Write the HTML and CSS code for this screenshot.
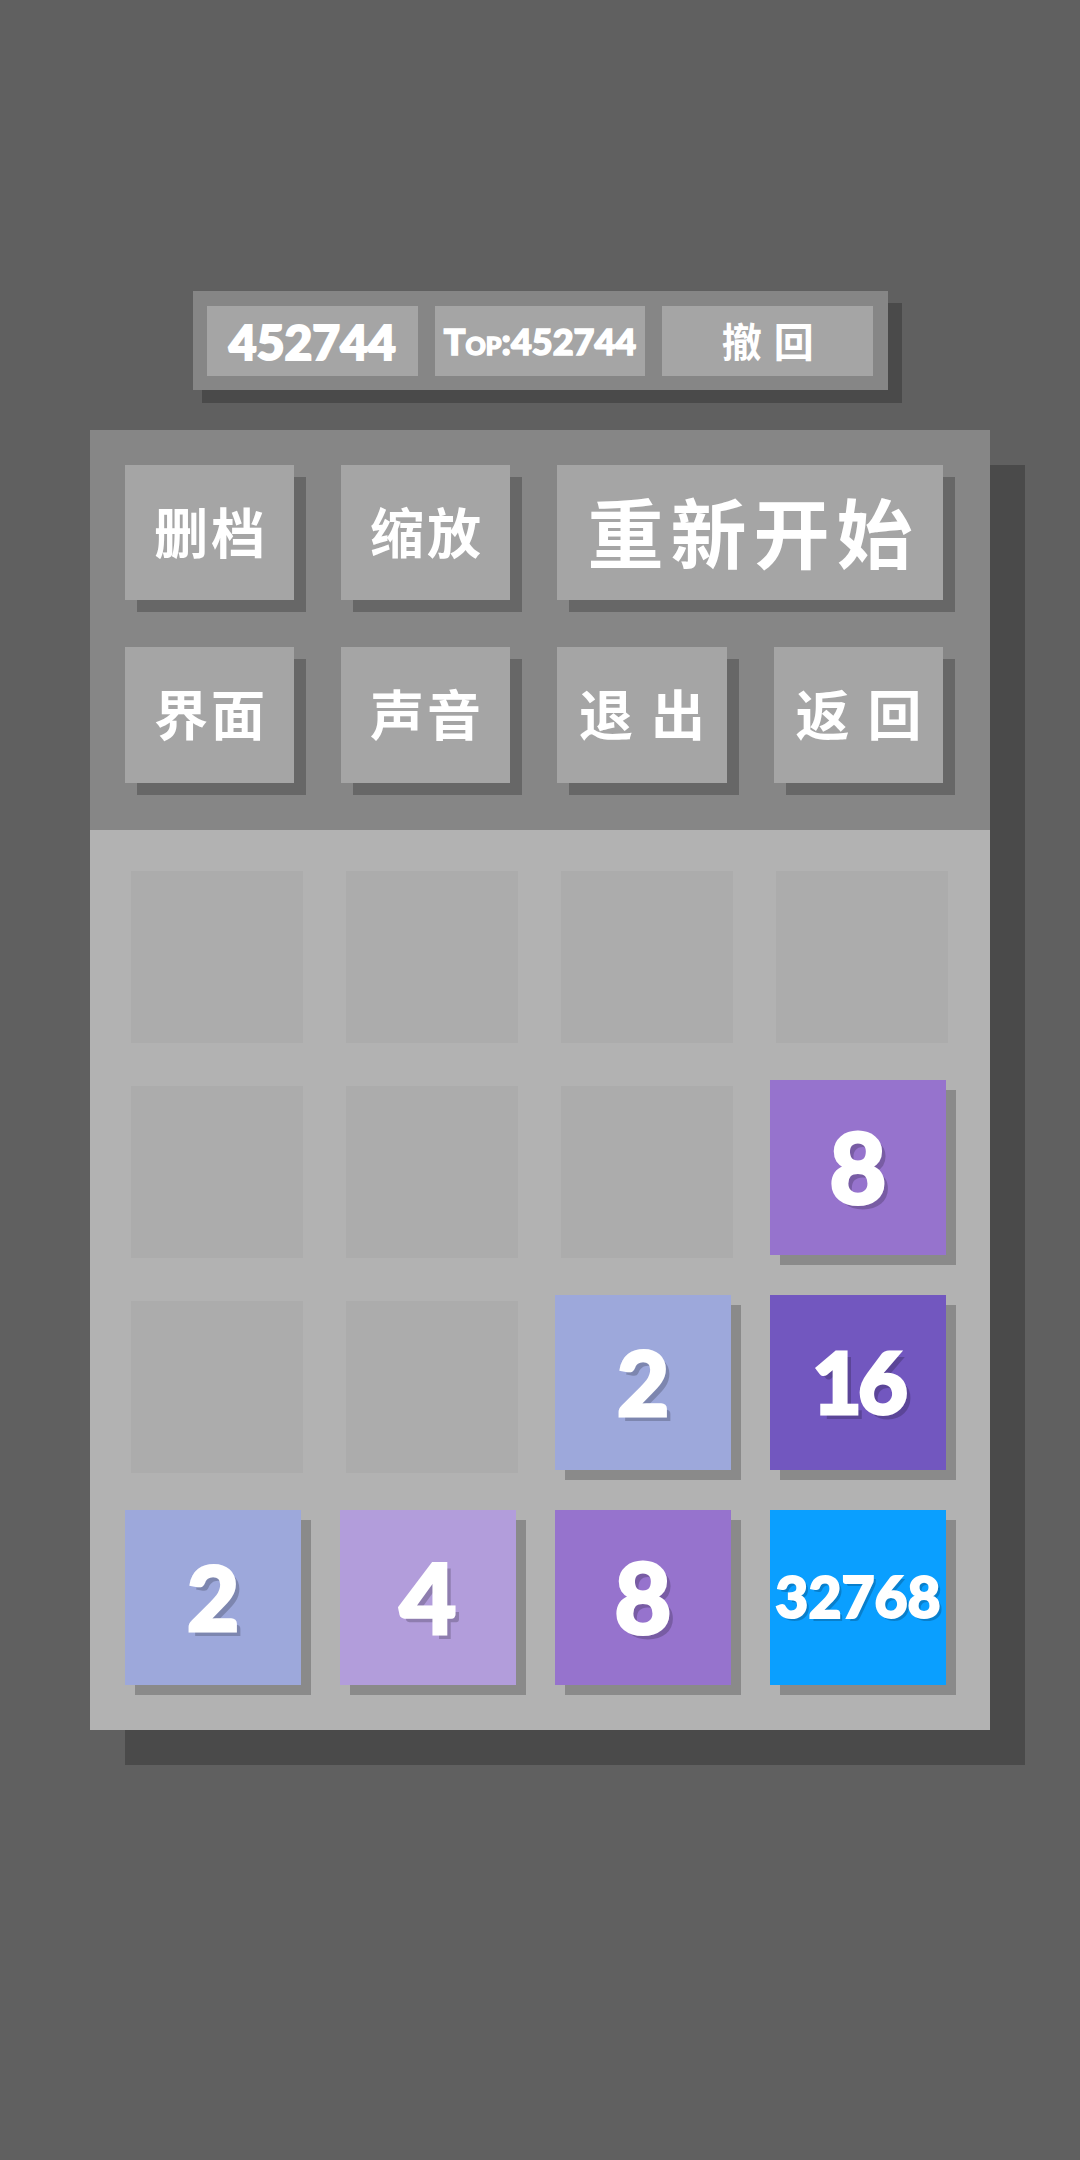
FILE: index.html
```html
<!DOCTYPE html>
<html lang="zh-CN">
<head>
    <meta charset="UTF-8">
    <meta name="viewport" content="width=device-width, initial-scale=1.0">
    <title>2048</title>
    <link rel="stylesheet" href="styles.css">
</head>
<body>
    <div class="scorebar">
        <div class="score">452744</div>
        <div class="score top">Top:452744</div>
        <div class="score undo">撤回</div>
    </div>
    <div class="panel">
        <div class="controls">
            <div class="btn">删档</div>
            <div class="btn">缩放</div>
            <div class="btn wide">重新开始</div>
            <div class="btn">界面</div>
            <div class="btn">声音</div>
            <div class="btn spaced">退出</div>
            <div class="btn spaced">返回</div>
        </div>
        <div class="board">
            <div class="slot"></div>
            <div class="slot"></div>
            <div class="slot"></div>
            <div class="slot"></div>

            <div class="slot"></div>
            <div class="slot"></div>
            <div class="slot"></div>
            <div class="tile t8">8</div>

            <div class="slot"></div>
            <div class="slot"></div>
            <div class="tile t2">2</div>
            <div class="tile t16">16</div>

            <div class="tile t2">2</div>
            <div class="tile t4">4</div>
            <div class="tile t8">8</div>
            <div class="tile t32768">32768</div>
        </div>
    </div>
</body>
</html>
```

FILE: styles.css
```css
* {
    margin: 0;
    padding: 0;
    box-sizing: border-box;
}

body {
    width: 1080px;
    height: 2160px;
    background-color: #606060;
    color: #fff;
    font-family: "Lato", "Noto Sans CJK SC", sans-serif;
    padding-top: 291px;
    overflow: hidden;
}

.scorebar {
    position: relative;
    z-index: 0;
    width: 695px;
    height: 99px;
    margin-left: 193px;
    padding: 15px 15px 14px 14px;
    display: flex;
    gap: 17px;
    background-color: #868686;
}

/* shadow is a bit bigger than the bar, box-shadow can't do that per side */
.scorebar::before {
    content: "";
    position: absolute;
    z-index: -1;
    top: 12px;
    left: 9px;
    right: -14px;
    bottom: -13px;
    background-color: #4a4a4a;
}

.scorebar::after {
    content: "";
    position: absolute;
    z-index: -1;
    top: 0;
    left: 0;
    right: 0;
    bottom: 0;
    background-color: #868686;
}

.score {
    flex: 1;
    display: flex;
    align-items: center;
    justify-content: center;
    background-color: #a5a5a5;
    font-size: 48px;
    font-weight: 900;
    -webkit-text-stroke: 2px #fff;
}

.top {
    font-size: 36px;
    font-variant: small-caps;
    -webkit-text-stroke: 1.5px #fff;
}

.undo {
    font-family: "Noto Sans CJK SC", sans-serif;
    font-size: 40px;
    font-weight: 700;
    letter-spacing: 12px;
    text-indent: 12px;
    padding-bottom: 2px;
    -webkit-text-stroke: 0;
}

.panel {
    width: 900px;
    height: 1300px;
    margin-top: 40px;
    margin-left: 90px;
    box-shadow: 35px 35px 0 #4a4a4a;
}

.controls {
    height: 400px;
    padding: 35px 47px 46px 35px;
    display: grid;
    grid-template-columns: 169px 169px 170px 169px;
    grid-template-rows: 135px 136px;
    gap: 47px;
    background-color: #868686;
}

.btn {
    display: flex;
    align-items: center;
    justify-content: center;
    padding-bottom: 5px;
    background-color: #a5a5a5;
    box-shadow: 12px 12px 0 #676767;
    font-family: "Noto Sans CJK SC", sans-serif;
    font-size: 54px;
    font-weight: 700;
    letter-spacing: 3px;
    text-indent: 3px;
}

.wide {
    grid-column: span 2;
    font-size: 76px;
    letter-spacing: 7px;
    text-indent: 7px;
}

.spaced {
    letter-spacing: 18px;
    text-indent: 18px;
}

.board {
    height: 900px;
    padding: 35px 0 0 35px;
    display: grid;
    grid-template-columns: repeat(4, 215px);
    grid-auto-rows: 215px;
    background-color: #b2b2b2;
}

.slot {
    width: 172px;
    height: 172px;
    margin: 6px 0 0 6px;
    background-color: #acacac;
}

.tile {
    width: 176px;
    height: 175px;
    padding-bottom: 4px;
    display: flex;
    align-items: center;
    justify-content: center;
    box-shadow: 10px 10px 0 #8a8a8a;
    font-size: 98px;
    font-weight: 900;
    -webkit-text-stroke: 3px #fff;
    text-shadow: 5px 5px 0 rgba(0, 0, 0, 0.2);
}

.t2 {
    background-color: #9da8db;
    font-size: 90px;
}

.t4 {
    background-color: #b29ddb;
}

.t8 {
    background-color: #9673cd;
}

.t16 {
    background-color: #7257bf;
    font-size: 86px;
    letter-spacing: -4px;
}

.t32768 {
    background-color: #0a9fff;
    font-size: 57px;
    -webkit-text-stroke: 2px #fff;
    text-shadow: 3px 3px 0 rgba(0, 0, 0, 0.2);
}
```
